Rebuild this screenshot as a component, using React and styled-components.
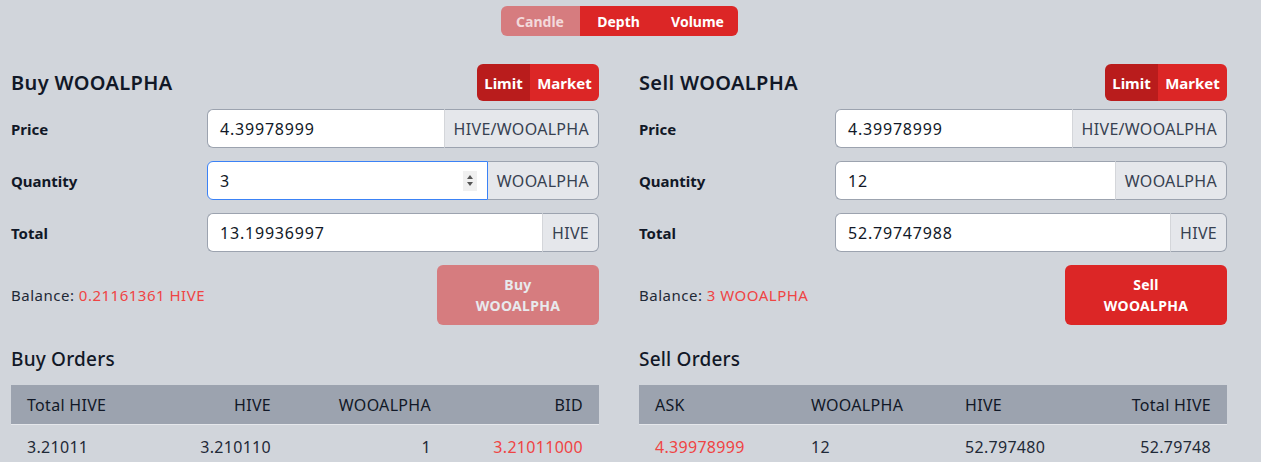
import React from "react"
import styled, { createGlobalStyle } from "styled-components"

const GlobalStyle = createGlobalStyle`
  body {
    margin: 0;
    background: #d1d5db;
    font-family: "Noto Sans", Lato, sans-serif;
    color: #111827;
  }
`

const Page = styled.div`
  padding: 6px 34px 0 11px;
`

const TopBar = styled.div`
  display: flex;
  justify-content: center;
`

const Segmented = styled.div`
  display: flex;
  border-radius: 6px;
  overflow: hidden;
`

const SegButton = styled.div`
  height: ${p => p.$h || 30}px;
  width: ${p => p.$w}px;
  display: flex;
  align-items: center;
  justify-content: center;
  font-weight: 700;
  font-size: ${p => p.$size || 14}px;
  color: ${p => (p.$faded ? "rgba(255,255,255,0.72)" : "#fff")};
  background: ${p => p.$bg};
`

const Columns = styled.div`
  display: grid;
  grid-template-columns: 588px 588px;
  column-gap: 40px;
  margin-top: 28px;
`

const Header = styled.div`
  display: flex;
  justify-content: space-between;
  align-items: center;
  height: 37px;
  margin-bottom: 8px;
`

const Title = styled.h2`
  margin: 0;
  font-size: 20px;
  font-weight: 600;
  letter-spacing: 0.35px;
`

const FormRow = styled.div`
  display: grid;
  grid-template-columns: 196px 1fr;
  align-items: center;
  height: 39px;
  margin-bottom: 13px;
`

const Label = styled.div`
  font-size: 15px;
  font-weight: 700;
`

const Group = styled.div`
  display: flex;
  height: 39px;
`

const Field = styled.div`
  flex: 1;
  display: flex;
  align-items: center;
  justify-content: space-between;
  background: #fff;
  border: 1px solid ${p => (p.$focused ? "#3b82f6" : "#9ca3af")};
  border-right: ${p => (p.$focused ? "1px solid #3b82f6" : "none")};
  border-radius: 6px 0 0 6px;
  padding: 0 12px 0 12px;
  font-size: 16px;
  letter-spacing: 0.8px;
  color: #111827;
`

const Spinner = styled.div`
  width: 14px;
  height: 20px;
  background: #f0f0f0;
  display: flex;
  flex-direction: column;
  align-items: center;
  justify-content: center;
  gap: 3px;
  margin-right: -2px;
`

const Arrow = styled.div`
  width: 0;
  height: 0;
  border-left: 3.5px solid transparent;
  border-right: 3.5px solid transparent;
  ${p =>
    p.$up
      ? "border-bottom: 4px solid #555;"
      : "border-top: 4px solid #555;"}
`

const Addon = styled.div`
  display: flex;
  align-items: center;
  padding: 0 9px;
  background: #e5e7eb;
  border: 1px solid #9ca3af;
  border-left: ${p => (p.$focused ? "none" : "1px solid #d4d6da")};
  border-radius: 0 6px 6px 0;
  font-size: 16px;
  letter-spacing: 0.3px;
  color: #374151;
`

const BalanceRow = styled.div`
  display: flex;
  justify-content: space-between;
  align-items: center;
  height: 60px;
`

const Balance = styled.div`
  font-size: 15px;
  letter-spacing: 0.5px;
  color: #1f2937;
  span {
    color: #ef4444;
  }
`

const ActionButton = styled.div`
  width: 162px;
  height: 60px;
  border-radius: 6px;
  background: #dc2626;
  opacity: ${p => (p.$disabled ? 0.5 : 1)};
  color: #fff;
  font-size: 14px;
  font-weight: 700;
  letter-spacing: 0.3px;
  line-height: 21px;
  display: flex;
  flex-direction: column;
  align-items: center;
  justify-content: center;
  text-align: center;
`

const OrdersTitle = styled.h3`
  margin: 14px 0 0;
  height: 40px;
  font-size: 19px;
  font-weight: 500;
  letter-spacing: 0.2px;
  display: flex;
  align-items: center;
`

const Table = styled.div`
  margin-top: 6px;
  font-family: "Noto Sans", sans-serif;
  font-size: 16px;
  letter-spacing: 0.3px;
`

const TRow = styled.div`
  display: grid;
  grid-template-columns: ${p => p.$cols};
  align-items: center;
  height: ${p => (p.$head ? 39 : 44)}px;
  padding: 0 16px;
  background: ${p => (p.$head ? "#9ca3af" : "transparent")};
  border-bottom: ${p => (p.$head ? "1px solid #e5e7eb" : "none")};
  color: ${p => (p.$head ? "#111827" : "#1f2937")};
`

const Cell = styled.div`
  text-align: ${p => (p.$right ? "right" : "left")};
  color: ${p => (p.$red ? "#ef4444" : "inherit")};
  white-space: nowrap;
`

function InputRow({ label, value, unit, focused }) {
  return (
    <FormRow>
      <Label>{label}</Label>
      <Group>
        <Field $focused={focused}>
          <span>{value}</span>
          {focused && (
            <Spinner>
              <Arrow $up />
              <Arrow />
            </Spinner>
          )}
        </Field>
        <Addon $focused={focused}>{unit}</Addon>
      </Group>
    </FormRow>
  )
}

function TradePanel({ side, price, qty, total, balance, qtyFocused, disabled }) {
  return (
    <div>
      <Header>
        <Title>{side} WOOALPHA</Title>
        <Segmented>
          <SegButton $h={37} $w={53} $size={15} $bg="#b91c1c">Limit</SegButton>
          <SegButton $h={37} $w={69} $size={15} $bg="#dc2626">Market</SegButton>
        </Segmented>
      </Header>
      <InputRow label="Price" value={price} unit="HIVE/WOOALPHA" />
      <InputRow label="Quantity" value={qty} unit="WOOALPHA" focused={qtyFocused} />
      <InputRow label="Total" value={total} unit="HIVE" />
      <BalanceRow>
        <Balance>
          Balance: <span>{balance}</span>
        </Balance>
        <ActionButton $disabled={disabled}>
          <div>{side}</div>
          <div>WOOALPHA</div>
        </ActionButton>
      </BalanceRow>
    </div>
  )
}

const buyCols = "122px 122px 160px 1fr"
const sellCols = "156px 154px 1fr 1fr"

export default function App() {
  return (
    <>
      <GlobalStyle />
      <Page>
        <TopBar>
          <Segmented>
            <SegButton $w={79} $bg="#d67c7f" $faded>Candle</SegButton>
            <SegButton $w={78} $bg="#dc2626">Depth</SegButton>
            <SegButton $w={80} $bg="#dc2626">Volume</SegButton>
          </Segmented>
        </TopBar>
        <Columns>
          <div>
            <TradePanel
              side="Buy"
              price="4.39978999"
              qty="3"
              total="13.19936997"
              balance="0.21161361 HIVE"
              qtyFocused
              disabled
            />
            <OrdersTitle>Buy Orders</OrdersTitle>
            <Table>
              <TRow $head $cols={buyCols}>
                <Cell>Total HIVE</Cell>
                <Cell $right>HIVE</Cell>
                <Cell $right>WOOALPHA</Cell>
                <Cell $right>BID</Cell>
              </TRow>
              <TRow $cols={buyCols}>
                <Cell>3.21011</Cell>
                <Cell $right>3.210110</Cell>
                <Cell $right>1</Cell>
                <Cell $right $red>3.21011000</Cell>
              </TRow>
            </Table>
          </div>
          <div>
            <TradePanel
              side="Sell"
              price="4.39978999"
              qty="12"
              total="52.79747988"
              balance="3 WOOALPHA"
            />
            <OrdersTitle>Sell Orders</OrdersTitle>
            <Table>
              <TRow $head $cols={sellCols}>
                <Cell>ASK</Cell>
                <Cell>WOOALPHA</Cell>
                <Cell>HIVE</Cell>
                <Cell $right>Total HIVE</Cell>
              </TRow>
              <TRow $cols={sellCols}>
                <Cell $red>4.39978999</Cell>
                <Cell>12</Cell>
                <Cell>52.797480</Cell>
                <Cell $right>52.79748</Cell>
              </TRow>
            </Table>
          </div>
        </Columns>
      </Page>
    </>
  )
}
